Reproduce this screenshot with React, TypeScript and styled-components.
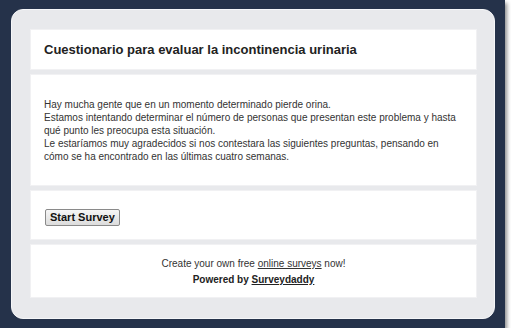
import styled, { createGlobalStyle } from "styled-components";

const GlobalStyle = createGlobalStyle`
  html, body {
    margin: 0;
    padding: 0;
    background: #ffffff;
  }
  body {
    font-family: "Liberation Sans", Arial, sans-serif;
  }
`;

const Frame = styled.div`
  width: 505px;
  height: 328px;
  box-sizing: border-box;
  padding: 9px 10px 0 11px;
  background: #25324a;
  box-shadow: 2px 3px 4px rgba(0, 0, 0, 0.45);
`;

const Panel = styled.div`
  width: 484px;
  height: 310px;
  box-sizing: border-box;
  padding: 19px 17px 0 18px;
  background: #e8e9ec;
  border: 1px solid #f5f6f8;
  border-radius: 12px;
  display: flex;
  flex-direction: column;
  gap: 4px;
`;

const Card = styled.div<{ $height: number }>`
  height: ${(p) => p.$height}px;
  box-sizing: border-box;
  background: #ffffff;
  border: 1px solid #f1f1f3;
`;

const TitleCard = styled(Card)`
  display: flex;
  align-items: center;
  padding: 0 13px;
`;

const Title = styled.h1`
  margin: 0;
  font-size: 13px;
  font-weight: bold;
  color: #222222;
`;

const BodyCard = styled(Card)`
  padding: 23px 13px 0;
`;

const Intro = styled.p`
  margin: 0;
  font-size: 10px;
  line-height: 13px;
  color: #333333;
`;

const ActionCard = styled(Card)`
  padding: 16px 14px 0;
`;

const StartButton = styled.button`
  height: 17px;
  padding: 0 4px;
  font-family: "Liberation Sans", Arial, sans-serif;
  font-size: 11px;
  font-weight: bold;
  color: #111111;
  background: linear-gradient(#f6f6f6, #dcdcdc);
  border: 1px solid #8a8a8a;
  border-radius: 2px;
  cursor: pointer;
`;

const FooterCard = styled(Card)`
  padding: 11px 0 0;
  text-align: center;
  font-size: 10px;
  line-height: 16px;
  color: #333333;
`;

const Promo = styled.div``;

const Powered = styled.div`
  font-weight: bold;
  color: #222222;
`;

const FooterLink = styled.a`
  color: inherit;
  text-decoration: underline;
`;

export default function App() {
  return (
    <>
      <GlobalStyle />
      <Frame>
        <Panel>
          <TitleCard $height={41}>
            <Title>Cuestionario para evaluar la incontinencia urinaria</Title>
          </TitleCard>
          <BodyCard $height={112}>
            <Intro>
              Hay mucha gente que en un momento determinado pierde orina.
              <br />
              Estamos intentando determinar el número de personas que presentan este problema y hasta
              qué punto les preocupa esta situación.
              <br />
              Le estaríamos muy agradecidos si nos contestara las siguientes preguntas, pensando en
              cómo se ha encontrado en las últimas cuatro semanas.
            </Intro>
          </BodyCard>
          <ActionCard $height={50}>
            <StartButton>Start Survey</StartButton>
          </ActionCard>
          <FooterCard $height={54}>
            <Promo>
              Create your own free <FooterLink href="#">online surveys</FooterLink> now!
            </Promo>
            <Powered>
              Powered by <FooterLink href="#">Surveydaddy</FooterLink>
            </Powered>
          </FooterCard>
        </Panel>
      </Frame>
    </>
  );
}
